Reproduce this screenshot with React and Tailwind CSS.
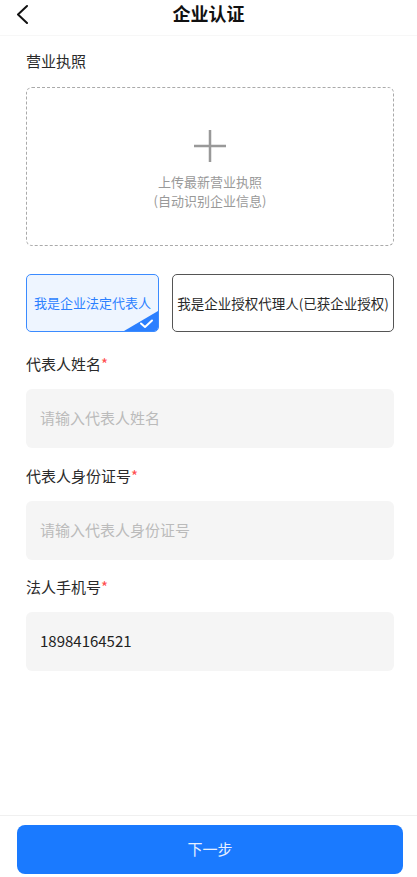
export default function App() {
  const font = { fontFamily: '"Noto Sans CJK SC", "Noto Sans", sans-serif' };
  return (
    <div className="min-h-[877px] flex flex-col bg-white text-[#333]" style={font}>
      {/* header */}
      <div className="h-[36px] relative flex justify-center pt-[1px] border-b border-[#f7f7f7]">
        <svg className="absolute left-[14px] top-[4px]" width="16" height="20" viewBox="0 0 16 20" fill="none">
          <path d="M13 2 L4 10.5 L13 19" stroke="#111" strokeWidth="2" strokeLinecap="round" strokeLinejoin="round" />
        </svg>
        <h1 className="text-[18px] leading-[24px] font-bold text-[#111]">企业认证</h1>
      </div>

      <div className="flex-1 pl-[26px] pr-[23px]">
        <div className="pt-[14px] text-[15px] leading-[22px] text-[#2a2a2a]">营业执照</div>

        <div className="mt-[15px] h-[159px] rounded-[6px] border border-dashed border-[#aaa] flex flex-col items-center justify-center">
          <svg width="34" height="34" viewBox="0 0 34 34" className="mt-[6px]">
            <path d="M17 1 V33 M1 17 H33" stroke="#999" strokeWidth="2.5" />
          </svg>
          <p className="mt-[9px] text-[13px] leading-[19px] text-[#999] text-center">
            上传最新营业执照
            <br />
            (自动识别企业信息)
          </p>
        </div>

        <div className="mt-[28px] flex gap-[13px]">
          <div className="relative overflow-hidden w-[133px] h-[58px] rounded-[5px] border border-[#3b8bff] bg-[#eef5ff] flex items-center justify-center text-[13px] text-[#2b7fff]">
            我是企业法定代表人
            <svg className="absolute right-0 bottom-0" width="34" height="20" viewBox="0 0 34 20">
              <path d="M0 20 L34 0 L34 20 Z" fill="#2b7fff" />
              <path d="M17 12.5 L21 16 L28 9.5" stroke="#fff" strokeWidth="2" fill="none" strokeLinecap="round" strokeLinejoin="round" />
            </svg>
          </div>
          <div className="flex-1 h-[58px] rounded-[5px] border border-[#555] bg-white flex items-center justify-center text-[13.5px] text-[#2a2a2a] whitespace-nowrap">
            我是企业授权代理人(已获企业授权)
          </div>
        </div>

        <Field label="代表人姓名" mt="mt-[21px]" placeholder="请输入代表人姓名" />
        <Field label="代表人身份证号" mt="mt-[17px]" placeholder="请输入代表人身份证号" />
        <Field label="法人手机号" mt="mt-[16px]" value="18984164521" />
      </div>

      <div className="border-t border-[#f0f0f0] pt-[9px] pb-[3px] pl-[17px] pr-[14px]">
        <button className="w-full h-[49px] rounded-[8px] bg-[#1a7aff] text-[15px] text-[#e6f0ff]">下一步</button>
      </div>
    </div>
  );
}

function Field({ label, mt, placeholder, value }) {
  return (
    <div>
      <div className={`${mt} text-[15px] leading-[22px] text-[#2a2a2a]`}>
        {label}
        <span className="text-[#ff4d4f]">*</span>
      </div>
      <div className="mt-[14px] h-[59px] rounded-[6px] bg-[#f5f5f5] flex items-center px-[14px] text-[15px]">
        {value ? <span className="text-[#222]">{value}</span> : <span className="text-[#bbb]">{placeholder}</span>}
      </div>
    </div>
  );
}
